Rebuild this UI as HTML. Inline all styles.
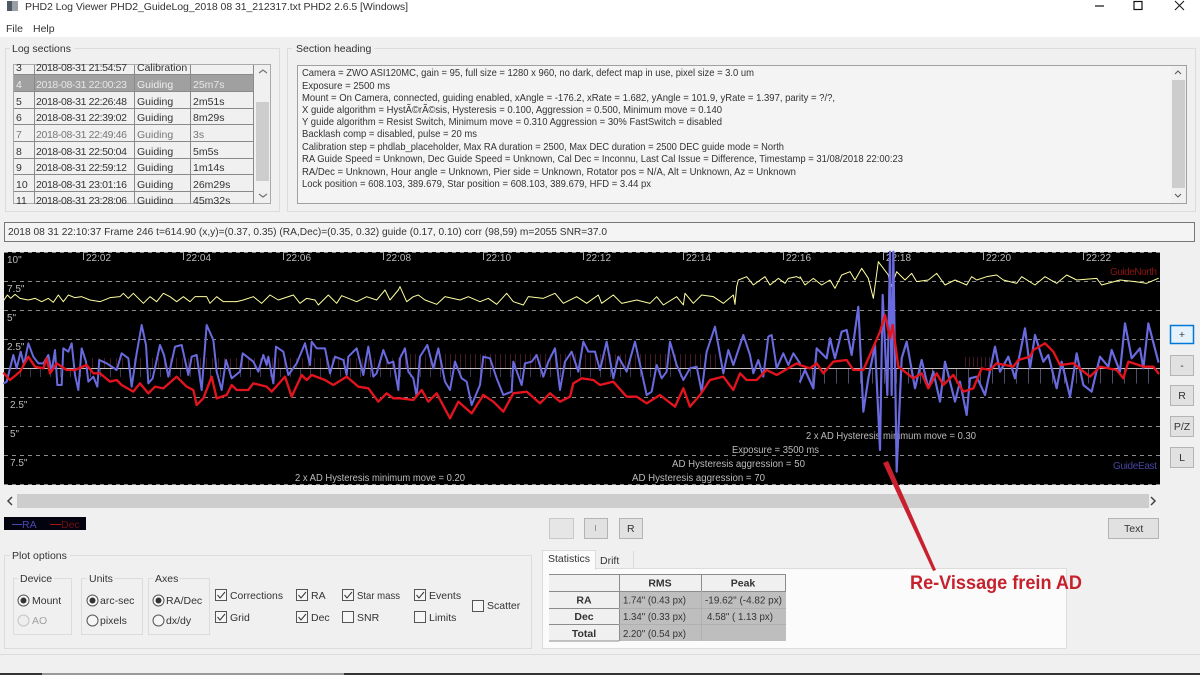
<!DOCTYPE html>
<html><head><meta charset="utf-8"><title>PHD2 Log Viewer</title>
<style>
html,body{margin:0;padding:0;background:#f0f0f0;overflow:hidden}
svg{display:block;filter:blur(.35px)}
text{font-family:"Liberation Sans",sans-serif;font-size:10.5px;fill:#333}
.g{fill:none;stroke:#dcdcdc}
.c{fill:#f6f6f6;stroke:#555}
.btn{fill:#e1e1e1;stroke:#b4b4b4}
.p text{fill:#bbb;font-size:10px}
.grid line{stroke:#8c8c8c;stroke-dasharray:4 4;stroke-width:1}
.tick{stroke:#aaa}
.h{font-weight:bold;text-anchor:middle}
</style></head><body>
<svg width="1200" height="675" viewBox="0 0 1200 675" xmlns="http://www.w3.org/2000/svg">
<rect width="1200" height="675" fill="#f0f0f0"/>
<rect width="1200" height="37" fill="#fff"/>
<rect x="7" y="1" width="11" height="10" fill="#9aa0a6"/><rect x="7" y="1" width="5" height="10" fill="#4d5a66"/>
<text x="25" y="10" textLength="383" lengthAdjust="spacing">PHD2 Log Viewer   PHD2_GuideLog_2018 08 31_212317.txt   PHD2 2.6.5 [Windows]</text>
<path d="M1095 6h9" stroke="#111" stroke-width="1.2"/><rect x="1134" y="1.500" width="8" height="8" fill="none" stroke="#111" stroke-width="1.2"/><path d="M1175 1l9 9M1184 1l-9 9" stroke="#111" stroke-width="1"/>
<text x="6" y="32">File</text><text x="33" y="32">Help</text>

<!-- Log sections -->
<rect class="g" x="5.500" y="48.500" width="274" height="163"/>
<rect x="10" y="42" width="64" height="12" fill="#f0f0f0"/>
<text x="12" y="52">Log sections</text>
<rect x="13.500" y="64.500" width="257" height="139" fill="#f0f0f0" stroke="#aaa"/>
<rect x="14" y="74" width="240" height="18" fill="#a0a0a0"/>
<g stroke="#8a8a8a" fill="none"><path d="M14 74.500h240M14 91.500h240M14 108.500h240M14 124.500h240M14 141.500h240M14 158.500h240M14 174.500h240M14 191.500h240M34.500 65v139M134.500 65v139M190.500 65v139M253.500 65v139"/></g>
<g>
<text x="16" y="71">3</text><text x="36" y="71" textLength="91">2018-08-31 21:54:57</text><text x="137" y="71">Calibration</text>
<text x="16" y="88" style="fill:#eee">4</text><text x="36" y="88" textLength="91" style="fill:#e6e6e6">2018-08-31 22:00:23</text><text x="137" y="88" style="fill:#eee">Guiding</text><text x="193" y="88" style="fill:#e6e6e6">25m7s</text>
<text x="16" y="105">5</text><text x="36" y="105" textLength="91">2018-08-31 22:26:48</text><text x="137" y="105">Guiding</text><text x="193" y="105">2m51s</text>
<text x="16" y="121">6</text><text x="36" y="121" textLength="91">2018-08-31 22:39:02</text><text x="137" y="121">Guiding</text><text x="193" y="121">8m29s</text>
<text x="16" y="138" style="fill:#777">7</text><text x="36" y="138" textLength="91" style="fill:#777">2018-08-31 22:49:46</text><text x="137" y="138" style="fill:#777">Guiding</text><text x="193" y="138" style="fill:#777">3s</text>
<text x="16" y="155">8</text><text x="36" y="155" textLength="91">2018-08-31 22:50:04</text><text x="137" y="155">Guiding</text><text x="193" y="155">5m5s</text>
<text x="16" y="171">9</text><text x="36" y="171" textLength="91">2018-08-31 22:59:12</text><text x="137" y="171">Guiding</text><text x="193" y="171">1m14s</text>
<text x="16" y="188">10</text><text x="36" y="188" textLength="91">2018-08-31 23:01:16</text><text x="137" y="188">Guiding</text><text x="193" y="188">26m29s</text>
<text x="16" y="204">11</text><text x="36" y="204" textLength="91">2018-08-31 23:28:06</text><text x="137" y="204">Guiding</text><text x="193" y="204">45m32s</text>
</g>
<rect x="14" y="204" width="240" height="6" fill="#f0f0f0"/>
<rect x="254" y="65" width="16" height="138" fill="#f0f0f0"/>
<rect x="256" y="102" width="13" height="79" fill="#cdcdcd"/>
<path d="M259 73l4-3 4 3M259 194l4 3 4-3" fill="none" stroke="#777" stroke-width="1.3"/>

<!-- Section heading -->
<rect class="g" x="287.500" y="48.500" width="908" height="163"/>
<rect x="292" y="42" width="82" height="12" fill="#f0f0f0"/>
<text x="296" y="52">Section heading</text>
<rect x="297.500" y="65.500" width="889" height="138" fill="#f4f4f4" stroke="#a0a0a0"/>
<rect x="1171" y="66" width="15" height="137" fill="#f0f0f0"/><rect x="1172" y="80" width="13" height="108" fill="#cdcdcd"/>
<path d="M1175 74l3-3 3 3M1175 194l3 3 3-3" fill="none" stroke="#555"/>
<g>
<text x="302" y="76" textLength="452" lengthAdjust="spacingAndGlyphs">Camera = ZWO ASI120MC, gain = 95, full size = 1280 x 960, no dark, defect map in use, pixel size = 3.0 um</text>
<text x="302" y="89" textLength="88" lengthAdjust="spacingAndGlyphs">Exposure = 2500 ms</text>
<text x="302" y="101" textLength="533" lengthAdjust="spacingAndGlyphs">Mount = On Camera,  connected, guiding enabled, xAngle = -176.2, xRate = 1.682, yAngle = 101.9, yRate = 1.397, parity = ?/?,</text>
<text x="302" y="113" textLength="420" lengthAdjust="spacingAndGlyphs">X guide algorithm = HystÃ©rÃ©sis, Hysteresis = 0.100, Aggression = 0.500, Minimum move = 0.140</text>
<text x="302" y="125" textLength="420" lengthAdjust="spacingAndGlyphs">Y guide algorithm = Resist Switch, Minimum move = 0.310 Aggression = 30% FastSwitch = disabled</text>
<text x="302" y="137" textLength="175" lengthAdjust="spacingAndGlyphs">Backlash comp = disabled, pulse = 20 ms</text>
<text x="302" y="150" textLength="482" lengthAdjust="spacingAndGlyphs">Calibration step = phdlab_placeholder, Max RA duration = 2500, Max DEC duration = 2500  DEC guide mode = North</text>
<text x="302" y="162" textLength="601" lengthAdjust="spacingAndGlyphs">RA Guide Speed = Unknown, Dec Guide Speed = Unknown, Cal Dec = Inconnu, Last Cal Issue = Difference, Timestamp = 31/08/2018 22:00:23</text>
<text x="302" y="175" textLength="494" lengthAdjust="spacingAndGlyphs">RA/Dec = Unknown, Hour angle = Unknown, Pier side = Unknown, Rotator pos = N/A, Alt = Unknown, Az = Unknown</text>
<text x="302" y="187" textLength="349" lengthAdjust="spacingAndGlyphs">Lock position = 608.103, 389.679, Star position = 608.103, 389.679, HFD = 3.44 px</text>
</g>

<!-- status -->
<rect x="4.500" y="222.500" width="1190" height="19" fill="#f4f4f4" stroke="#777"/>
<text x="8" y="235" textLength="599" lengthAdjust="spacingAndGlyphs">2018 08 31 22:10:37 Frame 246 t=614.90 (x,y)=(0.37, 0.35) (RA,Dec)=(0.35, 0.32) guide (0.17, 0.10) corr (98,59) m=2055 SNR=37.0</text>

<!-- Plot -->
<rect x="4" y="252" width="1156" height="233" fill="#000"/>
<g class="grid">
<line x1="4" x2="1160" y1="252.500" y2="252.500"/><line x1="4" x2="1160" y1="281.500" y2="281.500"/><line x1="4" x2="1160" y1="310.500" y2="310.500"/><line x1="4" x2="1160" y1="339.500" y2="339.500"/><line x1="4" x2="1160" y1="397.500" y2="397.500"/><line x1="4" x2="1160" y1="426.500" y2="426.500"/><line x1="4" x2="1160" y1="455.500" y2="455.500"/><line x1="4" x2="1160" y1="484.500" y2="484.500"/>
</g>
<path d="M83.500 252v8M183.500 252v8M283.500 252v8M383.500 252v8M483.500 252v8M583.500 252v8M683.500 252v8M783.500 252v8M883.500 252v8M983.500 252v8M1083.500 252v8" class="tick"/>
<g class="p">
<text x="86" y="261">22:02</text><text x="186" y="261">22:04</text><text x="286" y="261">22:06</text><text x="386" y="261">22:08</text><text x="486" y="261">22:10</text><text x="586" y="261">22:12</text><text x="686" y="261">22:14</text><text x="786" y="261">22:16</text><text x="886" y="261">22:18</text><text x="986" y="261">22:20</text><text x="1086" y="261">22:22</text>
<text x="7" y="263">10"</text><text x="7" y="292">7.5"</text><text x="7" y="321">5"</text><text x="7" y="350">2.5"</text><text x="10" y="408">2.5"</text><text x="10" y="437">5"</text><text x="10" y="466">7.5"</text>
<text x="295" y="481" textLength="170" lengthAdjust="spacingAndGlyphs">2 x AD Hysteresis minimum move = 0.20</text>
<text x="632" y="481" textLength="133" lengthAdjust="spacingAndGlyphs">AD Hysteresis aggression = 70</text>
<text x="672" y="467" textLength="133" lengthAdjust="spacingAndGlyphs">AD Hysteresis aggression = 50</text>
<text x="732" y="453" textLength="87" lengthAdjust="spacingAndGlyphs">Exposure = 3500 ms</text>
<text x="806" y="439" textLength="170" lengthAdjust="spacingAndGlyphs">2 x AD Hysteresis minimum move = 0.30</text>
<text x="1110" y="275" style="fill:#8a1414" textLength="47">GuideNorth</text>
<text x="1113" y="469" style="fill:#4646a0" textLength="44">GuideEast</text>
</g>
<!-- correction bars -->
<g fill="none">
<path d="M92 363H400" stroke="#7a3040" stroke-width="10" stroke-dasharray="1 5" opacity=".55"/>
<path d="M400 361H720" stroke="#7a3040" stroke-width="14" stroke-dasharray="1 4" opacity=".55"/>
<path d="M965 362H990" stroke="#7a3040" stroke-width="10" stroke-dasharray="1 3" opacity=".55"/>
<path d="M20 373H700" stroke="#66669a" stroke-width="8" stroke-dasharray="1 9" opacity=".55"/>
<path d="M800 376H1160" stroke="#8080b0" stroke-width="15" stroke-dasharray="1 11" opacity=".6"/>
</g>
<path d="M4 368.500H1160" stroke="#c8c0c0" stroke-width="1"/>

<g fill="none" stroke-linejoin="round" stroke-linecap="round">
<!-- segment 1 -->
<g transform="translate(0,245) scale(.33333)">
<polyline stroke="#ffffa0" stroke-width="3" points="12,165 22,150 32,160 45,148 60,160 85,165 105,160 125,170 145,160 160,172 175,150 190,170 205,150 225,158 245,155 270,165 300,170 330,158 360,155 370,145 385,160 400,145 430,175 450,155 470,170 490,145 510,155 530,170 550,155 570,170 585,155 620,155 630,175 650,155 670,170 690,170 710,170 730,165 760,155 785,175 810,150 835,165 880,150 900,175 920,160 945,165 955,180 985,150 1010,175 1025,152 1045,160 1070,170 1100,155 1130,165 1155,135 1170,165 1195,135 1200,125"/>
<polyline stroke="#6a6ae0" stroke-width="6" points="12,415 20,410 30,370 40,330 50,370 62,320 72,360 85,295 100,335 115,355 130,355 145,330 155,380 165,315 172,420 185,420 190,310 205,320 215,295 225,390 235,435 245,310 258,350 265,410 280,395 292,425 298,345 320,355 350,375 365,325 385,340 395,425 410,325 425,240 438,300 445,415 458,400 480,300 492,330 505,395 525,305 545,300 565,390 575,335 590,330 605,435 620,240 640,285 650,380 665,435 678,345 695,400 720,380 728,325 760,350 775,380 790,330 800,360 805,335 820,415 828,305 850,320 865,390 890,355 915,295 930,360 935,290 950,310 975,310 990,385 1005,335 1030,345 1040,390 1045,335 1070,310 1090,390 1105,305 1120,395 1130,385 1150,315 1165,355 1180,350 1195,435 1200,340"/>
<polyline stroke="#e4141e" stroke-width="7" points="12,385 30,405 60,380 85,335 105,365 130,370 140,340 150,385 170,355 200,375 225,375 260,360 280,385 300,385 330,410 350,405 365,420 400,440 420,415 445,445 465,425 490,430 530,395 560,425 580,435 590,480 610,460 635,395 650,460 680,450 695,420 710,435 745,435 760,415 800,425 815,440 855,395 875,455 905,390 920,405 935,390 975,405 1000,420 1040,395 1075,425 1105,430 1135,470 1160,445 1180,460 1200,460"/>
</g>
<!-- segment 2 -->
<g transform="translate(400,245) scale(.33333)">
<polyline stroke="#ffffa0" stroke-width="3" points="0,125 20,170 40,155 55,150 75,165 110,178 135,155 180,165 205,155 240,170 265,160 290,178 320,145 340,170 370,180 385,155 430,160 465,145 490,175 530,155 560,175 595,150 605,175 640,150 665,175 710,165 750,175 770,155 790,180 830,155 850,180 855,145 880,175 905,150 940,155 970,175 1000,150 1005,178 1010,125 1015,105 1040,95 1060,120 1095,95 1110,120 1135,100 1155,115 1165,100 1190,95 1200,100"/>
<polyline stroke="#6a6ae0" stroke-width="6" points="0,340 15,310 25,380 40,400 50,455 60,335 82,300 100,370 115,310 135,410 150,435 165,350 185,400 200,410 215,480 240,420 250,335 270,340 290,400 310,450 335,440 340,350 365,420 375,355 395,350 410,330 430,395 445,350 465,310 480,435 495,350 515,320 535,380 550,290 565,320 585,320 600,375 620,290 640,400 655,335 680,380 705,290 740,450 755,440 770,360 785,400 800,380 810,290 830,360 850,405 870,370 890,365 905,440 920,320 945,245 970,385 985,315 1000,360 1030,270 1050,330 1060,385 1075,345 1090,395 1105,275 1115,270 1130,370 1150,325 1165,360 1180,325 1200,355"/>
<polyline stroke="#e4141e" stroke-width="7" points="0,460 40,465 65,435 85,470 110,445 150,520 175,470 215,505 250,450 280,470 310,500 340,445 380,440 420,475 450,445 480,470 510,455 520,415 545,400 580,405 600,420 640,410 680,455 710,455 740,475 780,450 825,485 850,430 870,485 900,450 930,405 970,395 1000,435 1020,385 1040,405 1070,405 1100,375 1130,390 1190,355 1200,360"/>
</g>
<!-- segment 3 -->
<g transform="translate(800,245) scale(.33333)">
<polyline stroke="#ffffa0" stroke-width="3" points="0,95 15,120 40,100 65,120 90,105 105,130 125,90 150,80 165,105 185,70 205,100 220,160 235,50 265,90 272,130 290,80 315,105 335,85 350,110 385,105 410,85 435,120 465,105 500,120 515,95 530,105 560,95 590,90 610,105 650,115 665,95 705,120 735,95 770,115 800,90 830,105 890,100 905,120 960,105 1005,110 1040,115 1075,100"/>
<polyline stroke="#6a6ae0" stroke-width="6.500" points="0,410 15,375 40,430 50,310 80,340 90,280 105,340 125,260 140,255 155,330 175,185 190,500 205,400 225,300 240,615 248,150 262,450 270,20 275,450 280,20 290,680 305,340 320,290 345,430 365,345 385,430 400,380 420,470 435,350 465,470 480,410 500,510 510,400 530,395 555,450 585,305 600,380 625,335 645,400 675,250 690,370 705,270 730,350 745,330 770,430 785,350 810,455 830,325 850,420 875,440 900,335 925,365 935,315 960,380 975,235 995,340 1020,310 1030,370 1045,235 1075,350"/>
<polyline stroke="#e4141e" stroke-width="7" points="0,360 30,370 50,355 70,385 100,350 140,345 160,375 190,375 240,260 255,210 270,280 278,240 295,365 340,400 365,385 385,430 410,385 430,420 460,390 490,440 520,430 545,370 570,375 590,355 640,365 655,345 690,335 700,315 735,295 760,320 780,360 820,355 870,395 900,365 950,375 970,400 985,350 1030,365 1060,365 1075,385"/>
</g>
</g>

<!-- side buttons -->
<rect x="1170.500" y="325.500" width="23" height="18" fill="#e5f1fb" stroke="#0078d7" stroke-width="1.500"/>
<rect class="btn" x="1170.500" y="355.500" width="23" height="20"/>
<rect class="btn" x="1170.500" y="385.500" width="23" height="20"/>
<rect class="btn" x="1170.500" y="416.500" width="23" height="20"/>
<rect class="btn" x="1170.500" y="447.500" width="23" height="20"/>
<text x="1182" y="338" text-anchor="middle">+</text><text x="1182" y="369" text-anchor="middle">-</text><text x="1182" y="399" text-anchor="middle">R</text><text x="1182" y="430" text-anchor="middle">P/Z</text><text x="1182" y="461" text-anchor="middle">L</text>

<!-- scroller -->
<rect x="17" y="494" width="1132" height="14" fill="#cdcdcd"/>
<path d="M12 497l-4 4 4 4M1151 497l4 4-4 4" fill="none" stroke="#444" stroke-width="1.500"/>

<!-- legend -->
<rect x="4" y="517" width="82" height="13" fill="#03030f"/>
<path d="M12 524.500h10" stroke="#4a4ab0"/><text x="22" y="528" style="fill:#4a4ab0">RA</text>
<path d="M50 524.500h11" stroke="#a01818"/><text x="61" y="528" style="fill:#701010">Dec</text>

<rect x="549.500" y="518.500" width="24" height="20" fill="#e6e6e6" stroke="#c8c8c8"/>
<rect class="btn" x="584.500" y="518.500" width="23" height="20"/>
<rect class="btn" x="619.500" y="518.500" width="23" height="20"/>
<rect class="btn" x="1108.500" y="518.500" width="50" height="20"/>
<path d="M595.500 525v6" stroke="#999"/>
<text x="627" y="532">R</text><text x="1124" y="532">Text</text>

<!-- plot options -->
<rect class="g" x="4.500" y="555.500" width="527" height="93"/>
<rect x="10" y="549" width="60" height="12" fill="#f0f0f0"/>
<text x="12" y="559">Plot options</text>
<rect class="g" x="13.500" y="578.500" width="58" height="56"/>
<rect class="g" x="81.500" y="578.500" width="61" height="56"/>
<rect class="g" x="148.500" y="578.500" width="61" height="56"/>
<rect x="18" y="572" width="36" height="12" fill="#f0f0f0"/><rect x="86" y="572" width="28" height="12" fill="#f0f0f0"/><rect x="153" y="572" width="26" height="12" fill="#f0f0f0"/>
<text x="20" y="582">Device</text><text x="89" y="582">Units</text><text x="155" y="582">Axes</text>
<g fill="#f6f6f6" stroke="#555"><circle cx="23.500" cy="600.500" r="5.500"/><circle cx="92.500" cy="600.500" r="5.500"/><circle cx="158.500" cy="600.500" r="5.500"/><circle cx="92.500" cy="620.500" r="5.500"/><circle cx="158.500" cy="620.500" r="5.500"/></g>
<circle cx="23.500" cy="620.500" r="5.500" fill="#eee" stroke="#c4c4c4"/>
<circle cx="23.500" cy="600.500" r="3" fill="#333"/><circle cx="92.500" cy="600.500" r="3" fill="#333"/><circle cx="158.500" cy="600.500" r="3" fill="#333"/>
<text x="32" y="604">Mount</text><text x="32" y="624" style="fill:#a0a0a0">AO</text>
<text x="100" y="604">arc-sec</text><text x="100" y="624">pixels</text>
<text x="166" y="604">RA/Dec</text><text x="166" y="624">dx/dy</text>

<g>
<rect class="c" x="215.500" y="589.500" width="11" height="11"/><rect class="c" x="215.500" y="611.500" width="11" height="11"/>
<rect class="c" x="296.500" y="589.500" width="11" height="11"/><rect class="c" x="296.500" y="611.500" width="11" height="11"/>
<rect class="c" x="342.500" y="589.500" width="11" height="11"/><rect class="c" x="342.500" y="611.500" width="11" height="11"/>
<rect class="c" x="414.500" y="589.500" width="11" height="11"/><rect class="c" x="414.500" y="611.500" width="11" height="11"/>
<rect class="c" x="472.500" y="600.500" width="11" height="11"/>
<g fill="none" stroke="#333"><path d="M217.500 595l2.500 3 5-6M217.500 617l2.500 3 5-6M298.500 595l2.500 3 5-6M298.500 617l2.500 3 5-6M344.500 595l2.500 3 5-6M416.500 595l2.500 3 5-6"/></g>
</g>
<text x="230" y="599" textLength="53" lengthAdjust="spacingAndGlyphs">Corrections</text><text x="230" y="621">Grid</text>
<text x="311" y="599">RA</text><text x="311" y="621">Dec</text>
<text x="357" y="599" textLength="43" lengthAdjust="spacingAndGlyphs">Star mass</text><text x="357" y="621">SNR</text>
<text x="429" y="599">Events</text><text x="429" y="621">Limits</text>
<text x="487" y="609">Scatter</text>

<!-- stats tabs -->
<rect x="542.500" y="568.500" width="524" height="80" fill="#fbfbfb" stroke="#dcdcdc"/>
<rect x="542.500" y="550.500" width="53" height="19" fill="#fbfbfb" stroke="#dcdcdc"/><rect x="543" y="566" width="52" height="4" fill="#fbfbfb"/>
<path d="M633.500 551v17" stroke="#dcdcdc"/>
<text x="548" y="562">Statistics</text><text x="600" y="564">Drift</text>

<rect x="549" y="574" width="70" height="67" fill="#f0f0f0"/>
<rect x="619" y="574" width="167" height="17" fill="#f0f0f0"/>
<rect x="619" y="591" width="167" height="50" fill="#bebebe"/>
<path d="M549 574.500h237M549 591.500h237M549 608.500h70M549 624.500h70M549 641h70M619.500 574v67M701.500 574v17M785.500 574v17" stroke="#8c8c8c" fill="none"/>
<path d="M619 608.500h167M619 624.500h167M701.500 591v50" stroke="#b0b0b0" fill="none"/>
<text x="660" y="586.500" class="h" text-anchor="middle">RMS</text><text x="743" y="586.500" class="h" text-anchor="middle">Peak</text>
<text x="584" y="603.500" class="h" text-anchor="middle">RA</text><text x="584" y="620" class="h" text-anchor="middle">Dec</text><text x="584" y="637" class="h" text-anchor="middle">Total</text>
<g>
<text x="623" y="603.500" textLength="63" lengthAdjust="spacingAndGlyphs">1.74" (0.43 px)</text>
<text x="623" y="620" textLength="63" lengthAdjust="spacingAndGlyphs">1.34" (0.33 px)</text>
<text x="623" y="637" textLength="63" lengthAdjust="spacingAndGlyphs">2.20" (0.54 px)</text>
<text x="705" y="603.500" textLength="77" lengthAdjust="spacingAndGlyphs">-19.62" (-4.82 px)</text>
<text x="707" y="620" textLength="66" lengthAdjust="spacingAndGlyphs">4.58" ( 1.13 px)</text>
</g>

<!-- annotation -->
<path d="M883 463L888 461L936 570L933 571Z" fill="#c8202f"/>
<text x="910" y="589" textLength="172" lengthAdjust="spacingAndGlyphs" style="font-size:19px;font-weight:bold;fill:#c5222e">Re-Vissage frein AD</text>

<!-- bottom -->
<path d="M0 654.500H1200" stroke="#dcdcdc"/>
<rect x="0" y="673" width="42" height="2" fill="#333"/><rect x="42" y="673" width="302" height="2" fill="#999"/><rect x="344" y="673" width="856" height="2" fill="#333"/>
</svg>
</body></html>
